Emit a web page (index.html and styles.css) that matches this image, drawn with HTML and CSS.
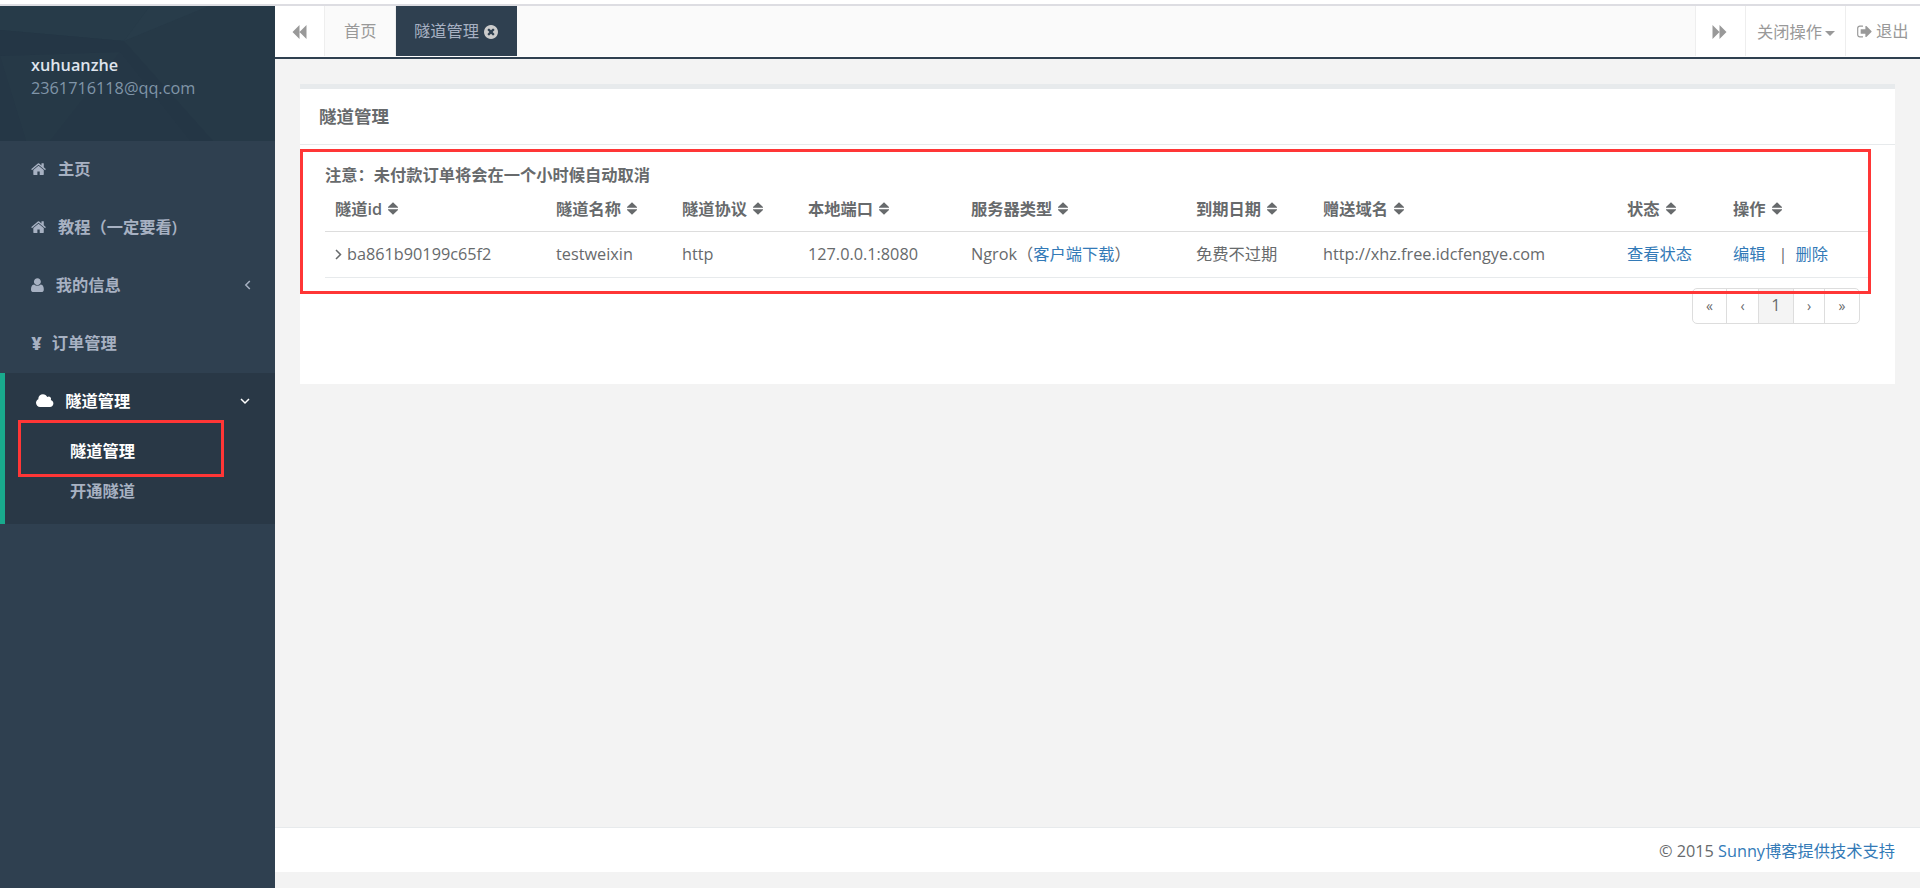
FILE: index.html
```html
<!DOCTYPE html>
<html>
<head>
<meta charset="utf-8" />
<title>隧道管理</title>
<link rel="stylesheet" href="styles.css">
</head>

<body>
<svg class="defs">
	<symbol id="home" viewBox="64 0 1664 1792"><path d="M1472 992v480q0 26-19 45t-45 19h-384v-384h-256v384h-384q-26 0-45-19t-19-45v-480q0-1 .5-3t.5-3l575-474 575 474q1 2 1 6zm223-69l-62 74q-8 9-21 11h-3q-13 0-21-7l-692-577-692 577q-12 8-24 7-13-2-21-11l-62-74q-8-10-7-23.5t11-21.5l719-599q32-26 76-26t76 26l244 204v-195q0-14 9-23t23-9h192q14 0 23 9t9 23v408l219 182q10 8 11 21.5t-7 23.5z"/></symbol>
	<symbol id="sort" viewBox="0 0 10 13"><path d="M5 0.3L10 5v.8H0V5zM5 12.7L10 8v-.8H0V8z"/></symbol>
</svg>

<div class="top-line"></div>
<div class="wrapper">
	<div class="sidebar">
		<div class="profile">
			<svg class="pattern" viewBox="0 0 275 135" preserveAspectRatio="none">
				<path fill="#273b49" d="M0 0H150L124 35 0 24z"/>
				<path fill="#283c4a" d="M150 0H209L124 35z"/>
				<path fill="#243645" d="M0 24L124 35 213 135H190L120 46 0 50z"/>
				<path fill="#253746" d="M0 50L26 135H0zM120 46L190 135H50z"/>
			</svg>
			<div class="name">xuhuanzhe</div>
			<div class="mail">2361716118@qq.com</div>
		</div>
		<div class="menu-item"><svg class="icon w-home"><use href="#home"/></svg><span>主页</span></div>
		<div class="menu-item"><svg class="icon w-home"><use href="#home"/></svg><span>教程（一定要看)</span></div>
		<div class="menu-item">
			<svg class="icon w-user" viewBox="192 0 1408 1792"><path d="M1600 1405q0 120-73 189.500t-194 69.500h-874q-121 0-194-69.500t-73-189.500q0-53 3.500-103.500t14-109 26.500-108.500 43-97.500 62-81 85.500-53.500 111.500-20q9 0 42 21.500t74.500 48 108 48 133.500 21.500 133.500-21.500 108-48 74.500-48 42-21.500q61 0 111.500 20t85.500 53.500 62 81 43 97.500 26.500 108.500 14 109 3.500 103.500zm-320-893q0 159-112.500 271.500t-271.500 112.500-271.500-112.500-112.500-271.500 112.500-271.500 271.500-112.500 271.500 112.500 112.500 271.500z"/></svg>
			<span>我的信息</span>
			<svg class="arrow" viewBox="0 0 10 10"><path d="M6.800 1L2.800 5l4 4"/></svg>
		</div>
		<div class="menu-item"><b class="yen">¥</b><span>订单管理</span></div>
		<div class="menu-active">
			<div class="menu-item">
				<svg class="icon w-cloud" viewBox="64 0 1920 1792"><path d="M1984 1152q0 159-112.500 271.500t-271.500 112.500h-1088q-185 0-316.500-131.500t-131.500-316.500q0-132 71-241.500t187-163.500q-2-28-2-43 0-212 150-362t362-150q158 0 286.500 88t187.500 230q70-62 166-62 106 0 181 75t75 181q0 75-41 138 129 30 213 134.500t84 239.500z"/></svg>
				<span>隧道管理</span>
				<svg class="arrow" viewBox="0 0 10 10"><path d="M1 3l4 4 4-4"/></svg>
			</div>
			<div class="sub-item current">隧道管理</div>
			<div class="sub-item">开通隧道</div>
			<div class="mark mark-menu"></div>
		</div>
	</div>

	<div class="main">
		<div class="tabs">
			<div class="roll-left"><svg width="15" height="14"><path d="M7.500 0v14L.5 7zM14.500 0v14L7.500 7z"/></svg></div>
			<div class="tab">首页</div>
			<div class="tab active">隧道管理<svg class="close" viewBox="128 128 1536 1536"><path d="M1277 1122q0-26-19-45l-181-181 181-181q19-19 19-45 0-27-19-46l-90-90q-19-19-46-19-26 0-45 19l-181 181-181-181q-19-19-45-19-27 0-46 19l-90 90q-19 19-19 46 0 26 19 45l181 181-181 181q-19 19-19 45 0 27 19 46l90 90q19 19 46 19 26 0 45-19l181-181 181 181q19 19 45 19 27 0 46-19l90-90q19-19 19-46zm387-226q0 209-103 385.500t-279.500 279.500-385.500 103-385.500-103-279.500-279.500-103-385.500 103-385.500 279.500-279.500 385.500-103 385.500 103 279.500 279.500 103 385.500z"/></svg></div>
			<div class="tab-space"></div>
			<div class="roll-right"><svg width="15" height="14"><path d="M.5 0v14l7-7zM7.500 0v14l7-7z"/></svg></div>
			<div class="roll-close">关闭操作<svg width="10" height="5"><path d="M0 0h10L5 5z"/></svg></div>
			<div class="logout"><svg class="exit" viewBox="64 192 1600 1408"><path d="M704 1440q0 4 1 20t.5 26.500-3 23.500-10 19.500-20.500 6.500h-320q-119 0-203.500-84.500t-84.500-203.500v-704q0-119 84.500-203.500t203.500-84.500h320q13 0 22.500 9.500t9.500 22.500q0 4 1 20t.5 26.500-3 23.500-10 19.500-20.500 6.500h-320q-66 0-113 47t-47 113v704q0 66 47 113t113 47h312l11.500 1 11.500 3 8 5.500 7 9 2 13.500zm928-544q0 26-19 45l-544 544q-19 19-45 19t-45-19-19-45v-288h-448q-26 0-45-19t-19-45v-384q0-26 19-45t45-19h448v-288q0-26 19-45t45-19 45 19l544 544q19 19 19 45z"/></svg>退出</div>
		</div>

		<div class="content">
			<div class="box">
				<div class="box-title">隧道管理</div>
				<div class="box-body">
					<div class="notice">注意：未付款订单将会在一个小时候自动取消</div>
					<table class="list">
						<colgroup>
							<col class="c1"><col class="c2"><col class="c3"><col class="c4"><col class="c5"><col class="c6"><col class="c7"><col class="c8"><col>
						</colgroup>
						<tr>
							<th>隧道id<svg><use href="#sort"/></svg></th>
							<th>隧道名称<svg><use href="#sort"/></svg></th>
							<th>隧道协议<svg><use href="#sort"/></svg></th>
							<th>本地端口<svg><use href="#sort"/></svg></th>
							<th>服务器类型<svg><use href="#sort"/></svg></th>
							<th>到期日期<svg><use href="#sort"/></svg></th>
							<th>赠送域名<svg><use href="#sort"/></svg></th>
							<th>状态<svg><use href="#sort"/></svg></th>
							<th>操作<svg><use href="#sort"/></svg></th>
						</tr>
						<tr>
							<td><svg class="toggle" viewBox="0 0 7 11"><path d="M1 1l4.500 4.500L1 10"/></svg>ba861b90199c65f2</td>
							<td>testweixin</td>
							<td>http</td>
							<td>127.0.0.1:8080</td>
							<td>Ngrok（<a>客户端下载</a>）</td>
							<td>免费不过期</td>
							<td>http://xhz.free.idcfengye.com</td>
							<td><a>查看状态</a></td>
							<td><a>编辑</a><span class="bar">|</span><a>删除</a></td>
						</tr>
					</table>
					<div class="pages">
						<span class="p1">«</span><span class="p2">‹</span><span class="p3">1</span><span class="p4">›</span><span class="p5">»</span>
					</div>
				</div>
				<div class="mark mark-table"></div>
			</div>
		</div>

		<div class="footer">© 2015 <a>Sunny博客提供技术支持</a></div>
	</div>
</div>
</body>

</html>
```
FILE: styles.css
```css
*{
	box-sizing: border-box;
}

body{
	margin: 0;
	height: 888px;
	overflow: hidden;
	background: #fff;
	color: #676a6c;
	font-family: "Open Sans", "Noto Sans CJK SC", sans-serif;
	font-size: 16.25px;
	line-height: 23px;
}

svg{
	fill: currentColor;
	flex: none;
}

.defs{
	display: none;
}

a{
	color: #337ab7;
}

.top-line{
	height: 6px;
	border-bottom: 2px solid #dddde2;
}

.wrapper{
	display: flex;
	height: 882px;
}

/* 左侧菜单 */
.sidebar{
	width: 275px;
	background: #2f4050;
	color: #a7b1c2;
	font-weight: 600;
}

.profile{
	position: relative;
	height: 135px;
	padding: 48px 31px 0;
	background: #263947;
}

.pattern{
	position: absolute;
	left: 0;
	top: 0;
	width: 275px;
	height: 135px;
}

.name, .mail{
	position: relative;
	color: #dfe4ed;
}

.mail{
	color: #8095a8;
	font-weight: 400;
}

.menu-item{
	display: flex;
	align-items: center;
	height: 58px;
	padding: 0 22px 2px 31.25px;
}

.icon{
	height: 16.25px;
	margin-right: 11.7px;
}

.w-home{
	width: 15.1px;
}

.w-user{
	width: 12.8px;
}

.w-cloud{
	width: 17.4px;
}

.yen{
	width: 20.5px;
	font-size: 18px;
}

.arrow{
	width: 10px;
	height: 10px;
	margin-left: auto;
	fill: none;
	stroke: currentColor;
	stroke-width: 1.5;
}

.menu-active{
	position: relative;
	height: 151px;
	border-left: 5px solid #19aa8d;
	background: #293846;
}

.menu-active .menu-item{
	color: #fff;
	height: 57px;
	padding-right: 25px;
	padding-bottom: 1px;
}

.sub-item{
	height: 40px;
	padding-left: 65px;
	line-height: 42px;
}

.current{
	color: #fff;
}

/* 红框标注 */
.mark{
	position: absolute;
	border: 3px solid #ff3636;
}

.mark-menu{
	left: 13px;
	top: 47px;
	width: 206px;
	height: 57px;
}

/* 顶部标签 */
.main{
	display: flex;
	flex-direction: column;
	flex: 1;
	background: #f3f3f3;
}

.tabs{
	display: flex;
	height: 53px;
	padding-bottom: 1px;
	border-bottom: 2px solid #2f4050;
	background: #fff;
	color: #999;
}

.tabs > div{
	display: flex;
	align-items: center;
	height: 50px;
	padding-bottom: 0;
}

.tabs .roll-left{
	width: 50px;
	padding: 2px 0 0 17px;
	border-right: 1px solid #eee;
}

.tabs .tab{
	width: 71px;
	padding: 1px 0 0 19px;
	border-right: 1px solid #eee;
	background: #fafafa;
}

.tabs .active{
	width: 121px;
	padding-left: 18px;
	border-right: 0;
	background: #2f4050;
	color: #a7b1c2;
}

.close{
	width: 14px;
	height: 14px;
	margin: 0 0 0 5px;
	color: #ccc;
}

.tab-space{
	flex: 1;
	background: #fafafa;
}

.tabs .roll-right{
	width: 50px;
	padding: 2px 0 0 16px;
	border-left: 1px solid #eee;
}

.tabs .roll-close{
	width: 100px;
	padding: 3px 0 0 11px;
	border-left: 1px solid #eee;
}

.roll-close svg{
	margin: 1px 0 0 3px;
}

.tabs .logout{
	width: 75px;
	padding-left: 11px;
	padding-top: 1px;
	border-left: 1px solid #eee;
}

.exit{
	width: 15px;
	height: 13px;
	margin-right: 4px;
}

/* 内容 */
.content{
	flex: 1;
	padding: 25px 25px 0;
}

.box{
	position: relative;
	height: 300px;
	border-top: 5px solid #e7eaec;
	background: #fff;
}

.box-title{
	height: 56px;
	padding: 16px 19px 0;
	border-bottom: 1px solid #e7eaec;
	font-size: 17.5px;
	font-weight: 600;
}

.box-body{
	padding: 19px 25px 0;
}

.notice{
	height: 24px;
	font-weight: 600;
}

.mark-table{
	left: 0;
	top: 60px;
	width: 1571px;
	height: 145px;
}

.list{
	width: 1545px;
	table-layout: fixed;
	border-collapse: separate;
	border-spacing: 0;
}

.c1{width: 221px;}
.c2{width: 126px;}
.c3{width: 126px;}
.c4{width: 163px;}
.c5{width: 225px;}
.c6{width: 127px;}
.c7{width: 304px;}
.c8{width: 106px;}

.list th, .list td{
	padding: 0 0 0 10px;
	text-align: left;
	white-space: nowrap;
	vertical-align: middle;
}

.list th{
	height: 44px;
	border-bottom: 1px solid #ddd;
	font-weight: 600;
}

.list td{
	height: 46px;
	border-bottom: 1px solid #e7eaec;
}

.list th svg{
	width: 10px;
	height: 13px;
	margin-left: 6px;
}

.list .toggle{
	width: 7px;
	height: 11px;
	margin-right: 5px;
	fill: none;
	stroke: currentColor;
	stroke-width: 1.5;
}

.bar{
	margin: 0 8px 0 13px;
}

.pages{
	display: flex;
	width: 168px;
	height: 36px;
	margin: 10px 10px 0 auto;
	border: 1px solid #ddd;
	border-radius: 5px;
	text-align: center;
	line-height: 34px;
}

.pages span{
	border-right: 1px solid #ddd;
	font-size: 14px;
}

.pages .p1{width: 34px;}
.pages .p2{width: 32px;}
.pages .p3{
	width: 35px;
	background: #f4f4f4;
	font-size: 16.25px;
	line-height: 33px;
}
.pages .p4{width: 31px;}
.pages .p5{
	width: 34px;
	border: 0;
}

.footer{
	height: 45px;
	margin-bottom: 16px;
	padding: 12px 25px 0;
	border-top: 1px solid #e7eaec;
	background: #fff;
	text-align: right;
}
```
